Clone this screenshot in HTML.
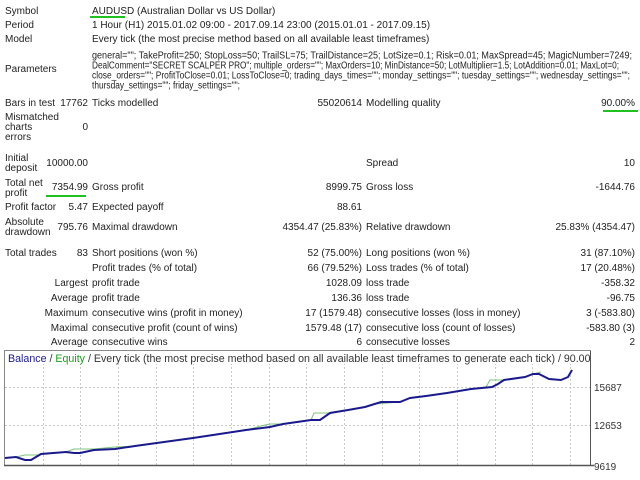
<!DOCTYPE html>
<html><head><meta charset="utf-8"><style>
body{margin:0;width:640px;height:480px;background:#fff;overflow:hidden;position:relative;font-family:"Liberation Sans",sans-serif;font-size:10px;color:#222;}
.t{position:absolute;line-height:10px;white-space:nowrap;}
.r{position:absolute;line-height:10px;white-space:nowrap;text-align:right;}
.g{position:absolute;height:2px;background:#1fc21f;}
</style></head><body>
<div class="t" style="left:5px;top:7px">Symbol</div>
<div class="t" style="left:92px;top:7px">AUDUSD (Australian Dollar vs US Dollar)</div>
<div class="g" style="left:90px;top:16px;width:35px"></div>
<div class="t" style="left:5px;top:21px">Period</div>
<div class="t" style="left:92px;top:21px">1 Hour (H1) 2015.01.02 09:00 - 2017.09.14 23:00 (2015.01.01 - 2017.09.15)</div>
<div class="t" style="left:5px;top:35px">Model</div>
<div class="t" style="left:92px;top:35px">Every tick (the most precise method based on all available least timeframes)</div>
<div class="t" style="left:5px;top:65px">Parameters</div>
<svg style="position:absolute;left:0;top:0" width="640" height="100" font-family="Liberation Sans,sans-serif" font-size="10" fill="#222">
<text x="92" y="58.5" textLength="540" lengthAdjust="spacingAndGlyphs">general=""; TakeProfit=250; StopLoss=50; TrailSL=75; TrailDistance=25; LotSize=0.1; Risk=0.01; MaxSpread=45; MagicNumber=7249;</text>
<text x="92" y="68.5" textLength="527" lengthAdjust="spacingAndGlyphs">DealComment="SECRET SCALPER PRO"; multiple_orders=""; MaxOrders=10; MinDistance=50; LotMultiplier=1.5; LotAddition=0.01; MaxLot=0;</text>
<text x="92" y="78.5" textLength="538" lengthAdjust="spacingAndGlyphs">close_orders=""; ProfitToClose=0.01; LossToClose=0; trading_days_times=""; monday_settings=""; tuesday_settings=""; wednesday_settings="";</text>
<text x="92" y="88.5" textLength="148" lengthAdjust="spacingAndGlyphs">thursday_settings=""; friday_settings="";</text>
</svg>
<div class="t" style="left:5px;top:99px">Bars in test</div>
<div class="r" style="right:552px;top:99px">17762</div>
<div class="t" style="left:92px;top:99px">Ticks modelled</div>
<div class="r" style="right:278px;top:99px">55020614</div>
<div class="t" style="left:366px;top:99px">Modelling quality</div>
<div class="r" style="right:5px;top:99px">90.00%</div>
<div class="g" style="left:603px;top:110px;width:35px"></div>
<div class="t" style="left:5px;top:113px">Mismatched<br>charts<br>errors</div>
<div class="r" style="right:552px;top:123px">0</div>
<div class="t" style="left:5px;top:154px">Initial<br>deposit</div>
<div class="r" style="right:552px;top:159px">10000.00</div>
<div class="t" style="left:366px;top:159px">Spread</div>
<div class="r" style="right:5px;top:159px">10</div>
<div class="t" style="left:5px;top:179px">Total net<br>profit</div>
<div class="r" style="right:552px;top:183px">7354.99</div>
<div class="g" style="left:46px;top:195px;width:40px"></div>
<div class="t" style="left:92px;top:183px">Gross profit</div>
<div class="r" style="right:278px;top:183px">8999.75</div>
<div class="t" style="left:366px;top:183px">Gross loss</div>
<div class="r" style="right:5px;top:183px">-1644.76</div>
<div class="t" style="left:5px;top:203px">Profit factor</div>
<div class="r" style="right:552px;top:203px">5.47</div>
<div class="t" style="left:92px;top:203px">Expected payoff</div>
<div class="r" style="right:278px;top:203px">88.61</div>
<div class="t" style="left:5px;top:218px">Absolute<br>drawdown</div>
<div class="r" style="right:552px;top:223px">795.76</div>
<div class="t" style="left:92px;top:223px">Maximal drawdown</div>
<div class="r" style="right:278px;top:223px">4354.47 (25.83%)</div>
<div class="t" style="left:366px;top:223px">Relative drawdown</div>
<div class="r" style="right:5px;top:223px">25.83% (4354.47)</div>
<div class="t" style="left:5px;top:249px">Total trades</div>
<div class="r" style="right:552px;top:249px">83</div>
<div class="t" style="left:92px;top:249px">Short positions (won %)</div>
<div class="r" style="right:278px;top:249px">52 (75.00%)</div>
<div class="t" style="left:366px;top:249px">Long positions (won %)</div>
<div class="r" style="right:5px;top:249px">31 (87.10%)</div>

<div class="t" style="left:92px;top:264px">Profit trades (% of total)</div>
<div class="r" style="right:278px;top:264px">66 (79.52%)</div>
<div class="t" style="left:366px;top:264px">Loss trades (% of total)</div>
<div class="r" style="right:5px;top:264px">17 (20.48%)</div>
<div class="r" style="right:552px;top:279px">Largest</div>
<div class="t" style="left:92px;top:279px">profit trade</div>
<div class="r" style="right:278px;top:279px">1028.09</div>
<div class="t" style="left:366px;top:279px">loss trade</div>
<div class="r" style="right:5px;top:279px">-358.32</div>
<div class="r" style="right:552px;top:294px">Average</div>
<div class="t" style="left:92px;top:294px">profit trade</div>
<div class="r" style="right:278px;top:294px">136.36</div>
<div class="t" style="left:366px;top:294px">loss trade</div>
<div class="r" style="right:5px;top:294px">-96.75</div>
<div class="r" style="right:552px;top:309px">Maximum</div>
<div class="t" style="left:92px;top:309px">consecutive wins (profit in money)</div>
<div class="r" style="right:278px;top:309px">17 (1579.48)</div>
<div class="t" style="left:366px;top:309px">consecutive losses (loss in money)</div>
<div class="r" style="right:5px;top:309px">3 (-583.80)</div>
<div class="r" style="right:552px;top:324px">Maximal</div>
<div class="t" style="left:92px;top:324px">consecutive profit (count of wins)</div>
<div class="r" style="right:278px;top:324px">1579.48 (17)</div>
<div class="t" style="left:366px;top:324px">consecutive loss (count of losses)</div>
<div class="r" style="right:5px;top:324px">-583.80 (3)</div>
<div class="r" style="right:552px;top:338px">Average</div>
<div class="t" style="left:92px;top:338px">consecutive wins</div>
<div class="r" style="right:278px;top:338px">6</div>
<div class="t" style="left:366px;top:338px">consecutive losses</div>
<div class="r" style="right:5px;top:338px">2</div>

<svg style="position:absolute;left:0;top:0" width="640" height="480">
 <g stroke="#c8c8c8" stroke-width="1" stroke-dasharray="2,2">
  <line x1="5" y1="387.5" x2="590" y2="387.5"/>
  <line x1="5" y1="425.5" x2="590" y2="425.5"/>
  <line x1="43.5" y1="351" x2="43.5" y2="465"/><line x1="80.5" y1="351" x2="80.5" y2="465"/><line x1="118.5" y1="351" x2="118.5" y2="465"/><line x1="156.5" y1="351" x2="156.5" y2="465"/><line x1="193.5" y1="351" x2="193.5" y2="465"/><line x1="231.5" y1="351" x2="231.5" y2="465"/><line x1="269.5" y1="351" x2="269.5" y2="465"/><line x1="306.5" y1="351" x2="306.5" y2="465"/><line x1="344.5" y1="351" x2="344.5" y2="465"/><line x1="382.5" y1="351" x2="382.5" y2="465"/><line x1="419.5" y1="351" x2="419.5" y2="465"/><line x1="457.5" y1="351" x2="457.5" y2="465"/><line x1="495.5" y1="351" x2="495.5" y2="465"/><line x1="532.5" y1="351" x2="532.5" y2="465"/><line x1="570.5" y1="351" x2="570.5" y2="465"/>
 </g>
 <rect x="4.5" y="350.5" width="586" height="115" fill="none" stroke="#888" stroke-width="1"/>
 <line x1="4" y1="465.5" x2="594" y2="465.5" stroke="#555" stroke-width="1.5"/>
 <line x1="590.5" y1="351" x2="590.5" y2="466" stroke="#555" stroke-width="1"/>
 <g fill="#333" font-family="Liberation Sans,sans-serif" font-size="10">
  <text x="594" y="391">15687</text><text x="594" y="429">12653</text><text x="594" y="470">9619</text>
 </g>
 <polyline fill="none" stroke="#7cc47c" stroke-width="1" points="5,458 16,457 25,455 39,455 41,454 66,452 74,449 94,449 115,447 135,446 164,442 193,438 213,435 246,430 265,425 270,424 283,424 311,420 314,413 330,413 348,410 365,407 375,404 400,402 410,398 426,396 447,393 471,389 486,387 490,380 504,380 525,377 533,374 541,372"/>
 <polyline fill="none" stroke="#1a1a8c" stroke-width="2" points="5,458 16,457 25,460 31,460 41,454 66,452 74,453 80,453 94,450 115,449 135,446 164,442 193,438 213,435 246,430 270,427 283,424 311,420 320,420 330,413 348,410 365,407 381,402 400,402 410,398 426,396 447,393 471,389 492,387 498,384 504,380 525,377 533,374 539,374 549,379 561,380 568,377 572,370"/>
 <rect x="5" y="351" width="585" height="13" fill="#fff"/>
 <svg x="5" y="351" width="585" height="14">
  <text x="3" y="11" font-family="Liberation Sans,sans-serif" font-size="11" textLength="592" lengthAdjust="spacingAndGlyphs" fill="#333"><tspan fill="#1a1a8c">Balance</tspan> / <tspan fill="#1a9c1a">Equity</tspan> / Every tick (the most precise method based on all available least timeframes to generate each tick) / 90.00%</text>
 </svg>
</svg>
</body></html>
